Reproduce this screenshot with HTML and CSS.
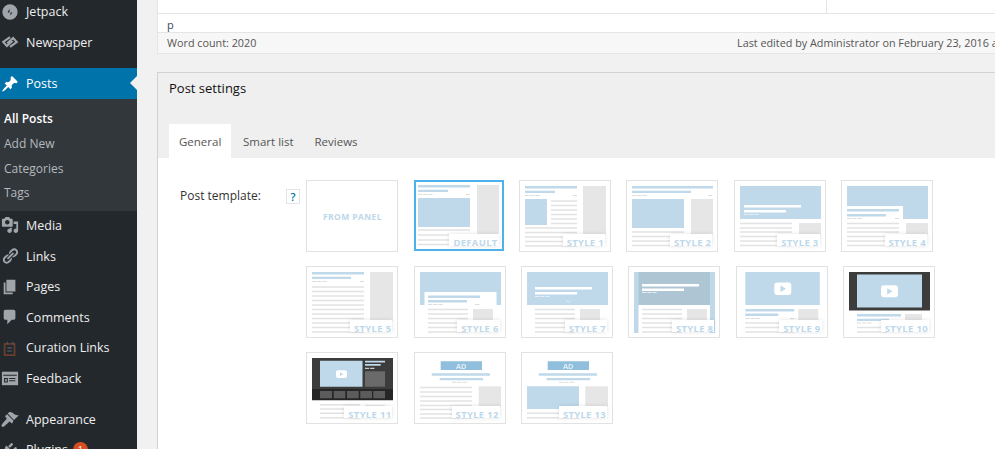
FILE: index.html
```html
<!DOCTYPE html>
<html lang="en">
<head>
<meta charset="utf-8">
<title>Edit Post</title>
<link rel="stylesheet" href="styles.css">
</head>
<body>
<div class="app">
<nav class="sidebar">
<ul class="menu">
<li class="item top"><svg class="ic" viewBox="0 0 20 20"><path d="M10 1.500a8.500 8.500 0 1 0 0 17 8.500 8.500 0 0 0 0-17z"/><path class="jp" d="M9.500 10.500H7.300l2.200-4zm1 0v3.500l2.200-3.500z"/></svg>Jetpack</li>
<li class="item top"><svg class="ic" viewBox="0 0 20 20"><path class="chain" d="M10 4.500 L2.500 10 L6.500 14.500 L13 8.500M10 15.500 L17.500 10 L13.500 5.500 L7 11.500"/></svg>Newspaper</li>
<li class="item top current"><svg class="ic" viewBox="0 0 20 20"><path d="M10.44 3.02l1.82-1.82 6.36 6.35-1.83 1.82c-1.05-.68-2.48-.57-3.41.36l-.75.75c-.92.93-1.04 2.35-.35 3.41l-1.83 1.82-2.41-2.41-2.8 2.79c-.42.42-3.38 2.71-3.8 2.29s1.86-3.39 2.28-3.81l2.79-2.79L4.1 9.36l1.83-1.82c1.05.69 2.48.57 3.4-.36l.75-.75c.93-.92 1.05-2.35.36-3.41z"/></svg>Posts</li>
<li class="submenu">
<div class="sub active">All Posts</div>
<div class="sub">Add New</div>
<div class="sub">Categories</div>
<div class="sub">Tags</div>
</li>
<li class="item"><svg class="ic" viewBox="0 0 20 20"><path d="M13 11V4c0-.55-.45-1-1-1h-1.670L9 1H5L3.670 3H2c-.55 0-1 .45-1 1v7c0 .55.45 1 1 1h10c.55 0 1-.45 1-1zM7 4.500c1.380 0 2.500 1.120 2.500 2.500S8.380 9.500 7 9.500 4.500 8.380 4.500 7 5.620 4.500 7 4.500zM14 6h5v10.500c0 1.380-1.120 2.500-2.500 2.500S14 17.880 14 16.500s1.120-2.500 2.500-2.500c.17 0 .34.02.5.05V9h-3V6zm-4 8.050V13h2v3.500c0 1.380-1.120 2.500-2.500 2.500S7 17.880 7 16.500 8.120 14 9.500 14c.17 0 .34.02.5.05z"/></svg>Media</li>
<li class="item"><svg class="ic" viewBox="0 0 20 20"><path d="M17.74 2.76c1.68 1.69 1.68 4.41 0 6.1l-1.53 1.52c-1.12 1.12-2.7 1.47-4.14 1.09l2.62-2.61.76-.77.76-.76c.84-.84.84-2.2 0-3.04-.84-.85-2.2-.85-3.04 0l-.77.76-3.38 3.38c-.37-1.44-.02-3.02 1.1-4.14l1.52-1.53c1.69-1.68 4.42-1.68 6.1 0zM8.59 13.43l5.34-5.34c.42-.42.42-1.1 0-1.52-.44-.43-1.13-.39-1.53 0l-5.33 5.34c-.42.42-.42 1.1 0 1.52.44.43 1.13.39 1.52 0zm-.76 2.29l4.14-4.15c.38 1.44.03 3.02-1.09 4.14l-1.52 1.53c-1.69 1.68-4.41 1.68-6.1 0-1.68-1.68-1.68-4.42 0-6.1l1.53-1.52c1.12-1.12 2.7-1.47 4.14-1.1l-4.14 4.15c-.85.84-.85 2.2 0 3.05.84.84 2.2.84 3.04 0z"/></svg>Links</li>
<li class="item"><svg class="ic" viewBox="0 0 20 20"><path d="M6 15V2h10v13H6zm-1 1h8v2H3V5h2v11z"/></svg>Pages</li>
<li class="item"><svg class="ic" viewBox="0 0 20 20"><path d="M5 2h9c1.100 0 2 .9 2 2v7c0 1.100-.9 2-2 2h-2l-5 5v-5H5c-1.100 0-2-.9-2-2V4c0-1.100.9-2 2-2z"/></svg>Comments</li>
<li class="item"><svg class="ic" viewBox="0 0 20 20"><path class="cur" d="M4 5.500h11v12.500H4z"/><path class="cur2" d="M7 3v3M13 3v3M7 10h5M7 13.500h5"/></svg>Curation Links</li>
<li class="item"><svg class="ic" viewBox="0 0 20 20"><path d="M1 3h18v15H1z"/><path class="fb" d="M2.500 7h15M4 10.500h3v4H4zM9 10.500h7M9 13h7"/></svg>Feedback</li>
<li class="item gap"><svg class="ic" viewBox="0 0 20 20"><path d="M14.48 11.06L7.41 3.99l1.500-1.500c.5-.56 2.300-.47 3.510.32 1.210.8 1.430 1.280 2.910 2.100 1.180.64 2.450 1.260 4.450.85zm-.71.71L6.700 4.700 4.930 6.470c-.39.39-.39 1.020 0 1.410l1.060 1.060c.39.39.39 1.030 0 1.420-.6.6-5.200 5.500-5.500 6.600-.2.9.9 2 1.800 1.800 1.100-.3 6-4.900 6.600-5.500.39-.39 1.030-.39 1.420 0l1.060 1.060c.39.39 1.020.39 1.410 0z"/></svg>Appearance</li>
<li class="item"><svg class="ic" viewBox="0 0 20 20"><path d="M13.11 4.36L9.87 7.6 8 5.73l3.24-3.24c.35-.34 1.05-.2 1.56.32.52.51.66 1.21.31 1.55zm-8 1.77l.91-1.12 9.01 9.01-1.19.84c-.71.71-2.63 1.16-3.82 1.16H6.14L4.9 17.26c-.59.59-1.54.59-2.12 0-.59-.58-.59-1.53 0-2.12l1.24-1.24v-3.88c0-1.13.4-3.19 1.09-3.89zm7.26 3.97l3.24-3.24c.34-.35 1.04-.21 1.55.31.52.51.66 1.21.31 1.55l-3.24 3.25z"/></svg>Plugins<span class="badge">1</span></li>
</ul>
</nav>
<main class="main">
<div class="inner">
<section class="editor">
<div class="ed-top"><div class="ed-cell"></div></div>
<div class="ed-path">p</div>
<div class="ed-status"><span class="wc">Word count: 2020</span><span class="edited">Last edited by Administrator on February 23, 2016 at 10:30 am</span></div>
</section>
<section class="box">
<h2 class="box-title">Post settings</h2>
<div class="tabs"><span class="tab on">General</span><span class="tab">Smart list</span><span class="tab">Reviews</span></div>
<div class="panel">
<div class="field">
<span class="field-label">Post template:</span>
<span class="help">?</span>
</div>
<div class="grid">
<div class="thumb panel-thumb"><span class="from">FROM PANEL</span></div>
<div class="thumb sel"><svg class="art" viewBox="0 0 81 61"><path class="bl" d="M0 0h52v2.400H0zM0 4.700h30v2.400H0zM0 13h52v29H0z"/><path class="gy" d="M59 0h22v49H59z"/><path class="mt" d="M0 9.500h15M48 9.500h4"/><path class="ln" d="M0 45h52M0 50h52M0 55h52M0 59.500h52"/></svg><span class="lab">DEFAULT</span></div>
<div class="thumb"><svg class="art" viewBox="0 0 81 61"><path class="bl" d="M0 0h52v2.400H0zM0 4.700h30v2.400H0zM0 13h22v26H0z"/><path class="gy" d="M58 0h23v49H58z"/><path class="mt" d="M0 9.500h15M48 9.500h4"/><path class="ln" d="M26 15h26M26 19.500h26M26 24h26M26 28.500h26M26 33h26M26 37.500h26M0 42h52M0 46.500h52M0 51h52M0 55.500h52M0 60h52"/></svg><span class="lab">STYLE 1</span></div>
<div class="thumb"><svg class="art" viewBox="0 0 81 61"><path class="bl" d="M0 0h81v2.400H0zM0 4.700h59v2.400H0zM0 13h52v29H0z"/><path class="gy" d="M59 13h22v36H59z"/><path class="mt" d="M0 9.500h15M76 9.500h5"/><path class="ln" d="M0 46h52M0 50.500h52M0 55h52M0 59.500h52"/></svg><span class="lab">STYLE 2</span></div>
<div class="thumb"><svg class="art" viewBox="0 0 81 61"><path class="bl" d="M0 0h81v33H0z"/><path class="wh" d="M4 19h57v2.400H4zM4 24h42v2.400H4z"/><path class="mtw" d="M4 28.500h15"/><path class="gy" d="M59 37h22v12H59z"/><path class="ln" d="M0 37.500h52M0 42h52M0 46h52M0 50.500h52M0 55h52M0 59.500h52"/></svg><span class="lab">STYLE 3</span></div>
<div class="thumb"><svg class="art" viewBox="0 0 81 61"><path class="bl" d="M0 0h81v33H0z"/><path class="wh" d="M0 20h56v14H0z"/><path class="bl" d="M0 23h52v2.400H0zM0 28h39v2.400H0z"/><path class="mt" d="M0 32.500h15M48 32.500h4"/><path class="gy" d="M59 37h22v12H59z"/><path class="ln" d="M0 37.500h52M0 42h52M0 46h52M0 50.500h52M0 55h52M0 59.500h52"/></svg><span class="lab">STYLE 4</span></div>
<div class="thumb"><svg class="art" viewBox="0 0 81 61"><path class="bl" d="M0 0h52v2.400H0zM0 4.700h39v2.400H0z"/><path class="gy" d="M58 0h23v49H58z"/><path class="mt" d="M0 9.500h15M48 9.500h4"/><path class="ln" d="M0 15h52M0 19.500h52M0 24h52M0 28.500h52M0 33h52M0 37.500h52M0 42h52M0 46.500h52M0 51h52M0 55.500h52M0 60h52"/></svg><span class="lab">STYLE 5</span></div>
<div class="thumb"><svg class="art" viewBox="0 0 81 61"><path class="bl" d="M0 0h81v33H0z"/><path class="wh" d="M4.500 20h72v14h-72z"/><path class="bl" d="M8 23.500h52v2.400H8zM8 28h39v2.400H8z"/><path class="mt" d="M8 32.500h15M55 32.500h5"/><path class="gy" d="M53 37h20v12H53z"/><path class="ln" d="M8 37.500h40M8 42h40M8 46.500h40M8 51h40M8 55.500h40M8 60h40"/></svg><span class="lab">STYLE 6</span></div>
<div class="thumb"><svg class="art" viewBox="0 0 81 61"><path class="bl" d="M0 0h81v33H0z"/><path class="wh" d="M8 15h57v2.600H8zM8 20h42v2.400H8z"/><path class="mtw" d="M8 24.500h15"/><path class="chev" d="M39.500 28.500l2 1.800 2-1.800"/><path class="gy" d="M53 37h20v12H53z"/><path class="ln" d="M8 37.500h40M8 42h40M8 46.500h40M8 51h40M8 55.500h40M8 60h40"/></svg><span class="lab">STYLE 7</span></div>
<div class="thumb"><svg class="art" viewBox="0 0 81 61"><path class="bl" d="M0 0h81v61H0z"/><path class="hero" d="M4.500 0h71.500v33H4.500z"/><path class="wh" d="M8 12h57v2.400H8zM8 16.500h42v2.400H8zM4.500 33h71.500v28H4.500z"/><path class="mtw" d="M8 20.500h15"/><path class="gy" d="M53 37h20v12H53z"/><path class="ln" d="M8 37.500h40M8 42h40M8 46.500h40M8 51h40M8 55.500h40M8 60h40"/></svg><span class="lab">STYLE 8</span></div>
<div class="thumb"><svg class="art" viewBox="0 0 81 61"><path class="bl" d="M3.300 0h74.500v33H3.300z"/><rect class="wh" x="32.300" y="10.500" width="17" height="12.500" rx="3"/><path class="bl" d="M38.500 13.500l5.500 3.200-5.500 3.200z"/><path class="bl" d="M3.300 37h49v2.400h-49zM3.300 41.500h33v2.400h-33z"/><path class="mt" d="M3.300 46.500h15M48 46.500h4.300"/><path class="gy" d="M56.300 37h20v12h-20z"/><path class="ln" d="M3.300 51h49M3.300 55.500h49M3.300 60h49"/></svg><span class="lab">STYLE 9</span></div>
<div class="thumb"><svg class="art" viewBox="0 0 81 61"><path class="dk" d="M0 0h81v38.500H0z"/><path class="bl" d="M8 2.500h65v33H8z"/><rect class="wh" x="32" y="13.300" width="17" height="12" rx="3"/><path class="bl" d="M38.200 16.200l5.300 3.100-5.300 3.100z"/><path class="bl" d="M8 42h44v2.400H8zM8 46.700h32v2.400H8z"/><path class="mt" d="M8 51h15"/><path class="gy" d="M56 42h17v7H56z"/><path class="ln" d="M8 55.500h30M8 60h30"/></svg><span class="lab">STYLE 10</span></div>
<div class="thumb"><svg class="art" viewBox="0 0 81 61"><path class="dk" d="M0 0h81v31H0z"/><path class="dk2" d="M0 31h81v11.300H0z"/><path class="bl" d="M8 2.700h42.500v26H8z"/><rect class="wh" x="24" y="12.300" width="11" height="7.700" rx="2"/><path class="bl" d="M28 14.300l3.500 1.900-3.500 1.900z"/><path class="bl" d="M53 2.700h20v1.800H53zM53 6h15.700v1.800H53z"/><path class="mtw" d="M53 10.300h10"/><path class="g6" d="M53 13.300h20v15.400H53z"/><path class="g5" d="M8 33h12v7.300H8zM21.700 33h11.600v7.300H21.700zM35 33h11.700v7.300H35zM48.300 33h11.700v7.300H48.300zM61.300 33h11.700v7.300H61.300z"/><path class="gy" d="M53 46.700h20v2.300H53z"/><path class="ln" d="M8 46.700h40M8 51h40M8 55.300h40M8 59.700h40"/></svg><span class="lab">STYLE 11</span></div>
<div class="thumb"><svg class="art" viewBox="0 0 81 61"><path class="ad" d="M20.700 3.300H62V12H20.700z"/><text class="adt" x="41.300" y="10.500">AD</text><path class="bl" d="M11.700 15.300H70v2.400H11.700zM19.700 20H63v2.200H19.700z"/><path class="mt" d="M32 24.300h16"/><path class="gy" d="M58.700 28.300H81V49H58.700z"/><path class="ln" d="M0 29.500h52M0 34h52M0 38.500h52M0 43h52M0 47.500h52M0 51.500h52M0 56h52M0 60h52"/></svg><span class="lab">STYLE 12</span></div>
<div class="thumb"><svg class="art" viewBox="0 0 81 61"><path class="ad" d="M20.700 3.300H62V12H20.700z"/><text class="adt" x="41.300" y="10.500">AD</text><path class="bl" d="M11.700 15.300H70v2.400H11.700zM19.700 20H63v2.200H19.700z"/><path class="mt" d="M32 24.300h16"/><path class="bl" d="M0 28.300h52V51H0z"/><path class="gy" d="M58.300 28.300H81V49H58.300z"/><path class="ln" d="M0 55.300h52M0 59.700h52"/></svg><span class="lab">STYLE 13</span></div>
</div>
</div>
</section>
</div>
</main>
</div>
</body>
</html>
```
FILE: styles.css
```css
* { box-sizing: border-box; }
html, body { margin: 0; height: 449px; overflow: hidden; }
body { background: #f1f1f1; font-family: "Open Sans", sans-serif; font-size: 13px; color: #444; }
.app { display: flex; height: 449px; overflow: hidden; }

.sidebar { width: 137px; flex: none; background: #23282d; overflow: hidden; }
.menu { list-style: none; margin: -3.500px 0 0; padding: 0; }
.item { display: flex; align-items: center; height: 30.600px; padding: 0 0 2px 1px; color: #eee; font-size: 12.500px; white-space: nowrap; position: relative; }
.item.top { padding-bottom: 0; }
.item:nth-child(3) { margin-top: 10.500px; height: 31px; }
.current { background: #0073aa; color: #fff; }
.current::after { content: ""; position: absolute; right: 0; top: 8px; border: 7.500px solid transparent; border-left: 0; border-right: 7.500px solid #f1f1f1; }
.gap { margin-top: 10px; }
.ic { width: 18px; height: 18px; margin-right: 7px; flex: none; fill: #a0a5aa; }
.current .ic { fill: #fff; }
.jp { fill: #23282d; }
.chain { fill: none; stroke: #a0a5aa; stroke-width: 2.400; }
.cur { fill: none; stroke: #6b3d2c; stroke-width: 2; }
.cur2 { fill: none; stroke: #4a5560; stroke-width: 1.500; }
.fb { fill: none; stroke: #23282d; stroke-width: 1.200; }
.submenu { background: #32373c; padding: 8px 0 0 4px; height: 112px; }
.sub { height: 24.700px; line-height: 24.700px; font-size: 12px; color: #b4b9be; }
.sub.active { color: #fff; font-weight: 600; }
.badge { display: inline-block; width: 15px; height: 15px; border-radius: 50%; background: #d54e21; color: #fff; font-size: 9px; line-height: 15px; text-align: center; margin-left: 5px; }

.main { flex: 1; min-width: 0; overflow: hidden; }
.inner { width: 1100px; margin-left: 20px; }

.editor { background: #fff; border: 1px solid #e5e5e5; border-top: 0; height: 54px; }
.ed-top { height: 14px; border-bottom: 1px solid #e5e5e5; }
.ed-cell { width: 669px; height: 13px; border-right: 1px solid #e5e5e5; }
.ed-path { height: 19px; line-height: 21px; padding-left: 9px; font-size: 11px; color: #3a4a5c; border-bottom: 1px solid #e5e5e5; }
.ed-status { display: flex; height: 20px; background: #f7f7f7; padding-left: 9px; font-size: 10.800px; line-height: 20px; color: #555; white-space: nowrap; }
.wc { width: 570px; flex: none; }

.box { margin-top: 18px; border: 1px solid #d2d2d2; border-right: 0; background: #efefef; }
.box-title { margin: 0; padding: 5px 0 0 11px; height: 51px; font-size: 13px; font-weight: 500; line-height: 20px; color: #111; }
.tabs { display: flex; padding-left: 11px; height: 34px; }
.tab { padding: 0 10.500px; line-height: 36px; font-size: 11.500px; color: #555; }
.tab.on { background: #fff; width: 62px; padding: 0 0 0 10px; margin-right: 1.500px; }
.panel { background: #fff; height: 300px; padding: 22px 0 0 22px; display: flex; align-items: flex-start; }
.field { width: 126.400px; flex: none; display: flex; align-items: flex-start; }
.field-label { width: 106px; flex: none; font-size: 12px; font-weight: 500; line-height: 30px; margin-top: 1px; color: #333; }
.help { width: 14px; height: 15px; margin-top: 9px; border: 1px solid #e5e5e5; font-size: 11px; font-weight: 600; line-height: 13px; text-align: center; color: #0073aa; }

.grid { width: 700px; display: flex; flex-wrap: wrap; align-items: flex-start; column-gap: 15.300px; row-gap: 14px; }
.thumb { position: relative; width: 92px; height: 72px; padding: 5px; border: 1px solid #e2e2e2; background: #fff; overflow: hidden; }
.art { display: block; width: 81px; height: 61px; filter: blur(.3px); }
.sel { width: 90px; height: 71px; padding: 3px 3px 3px 2px; border: 2px solid #4db2ec; }
.panel-thumb { display: flex; align-items: center; justify-content: center; }
.from { font-size: 8.500px; font-weight: 700; letter-spacing: .4px; color: #bdd8ea; }
.lab { position: absolute; right: 5px; bottom: 5px; height: 12px; padding: 0 1px 0 4px; background: #fff; box-shadow: 0 0 4px rgba(0,0,0,.12); font-size: 9.500px; font-weight: 700; line-height: 17px; letter-spacing: .3px; color: #bdd8ea; white-space: nowrap; }
.sel .lab { right: 3px; bottom: 3px; }

.bl { fill: #bfd9ea; }
.gy { fill: #e6e6e6; }
.wh { fill: #fff; }
.hero { fill: #aec6d4; }
.dk { fill: #3c3c3c; }
.dk2 { fill: #262626; }
.g6 { fill: #6a6a6a; }
.g5 { fill: #5c5c5c; }
.ad { fill: #8fbfdc; }
.adt { font-size: 7.500px; font-weight: 700; fill: #deecf5; text-anchor: middle; }
.ln { fill: none; stroke: #e2e2e2; stroke-width: 1.500; }
.mt { fill: none; stroke: #d8d8d8; stroke-width: .9; stroke-dasharray: 4.200 1; }
.mtw { fill: none; stroke: #e6f0f6; stroke-width: 1; stroke-dasharray: 4.200 1; }
.chev { fill: none; stroke: #e6f0f6; stroke-width: 1; }
```
